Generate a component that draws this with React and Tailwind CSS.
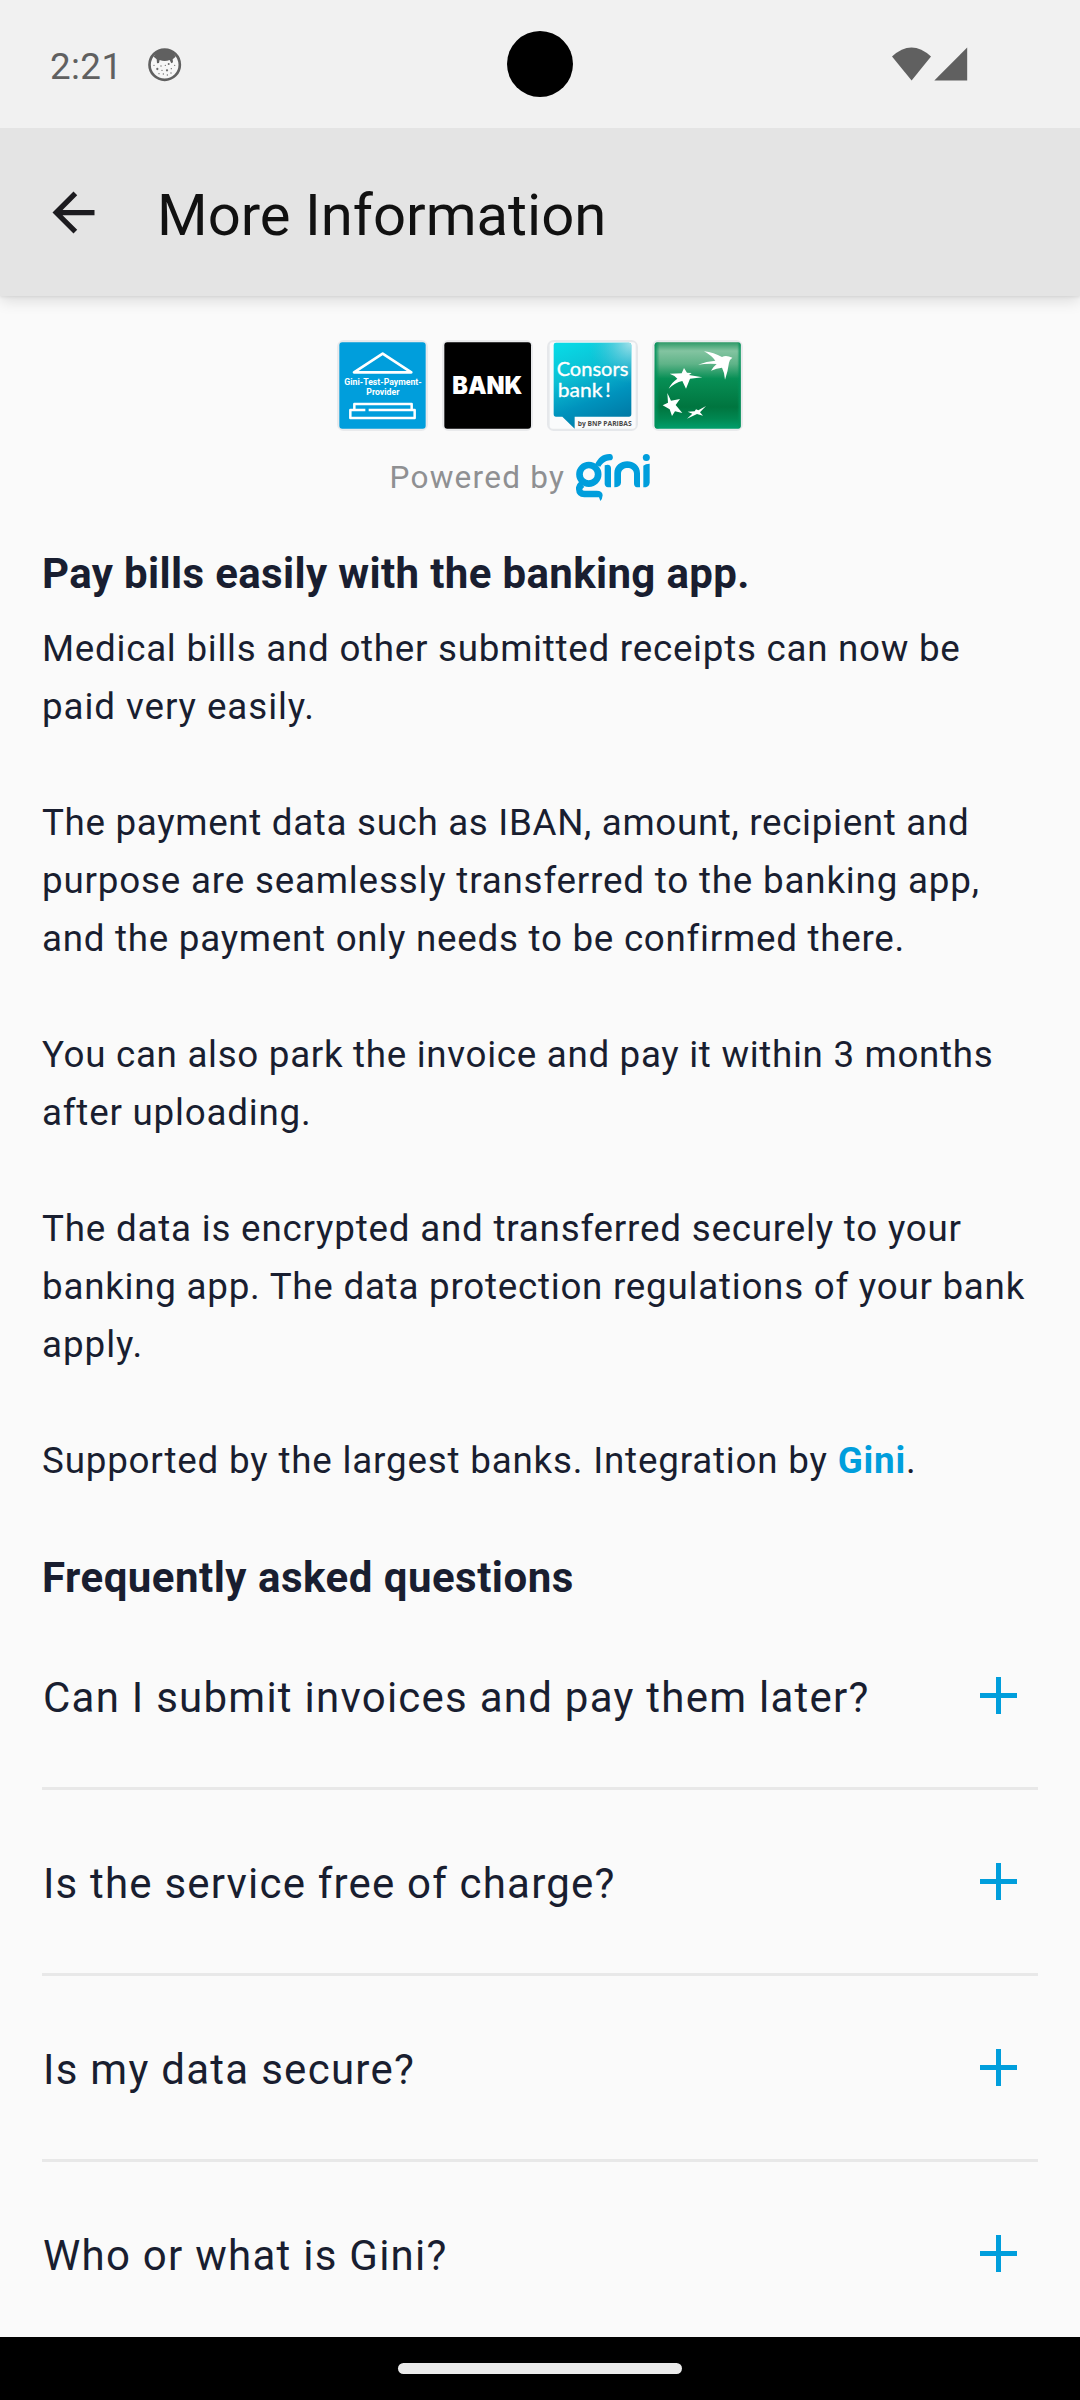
const paragraphs = [
  [
    ["Medical bills and other submitted receipts can now be", "tracking-[0.735px]"],
    ["paid very easily.", "tracking-[0.92px]"],
  ],
  [
    ["The payment data such as IBAN, amount, recipient and", "tracking-[0.675px]"],
    ["purpose are seamlessly transferred to the banking app,", "tracking-[0.81px]"],
    ["and the payment only needs to be confirmed there.", "tracking-[0.735px]"],
  ],
  [
    ["You can also park the invoice and pay it within 3 months", "tracking-[0.69px]"],
    ["after uploading.", "tracking-[0.78px]"],
  ],
  [
    ["The data is encrypted and transferred securely to your", "tracking-[0.79px]"],
    ["banking app. The data protection regulations of your bank", "tracking-[0.75px]"],
    ["apply.", "tracking-[0.98px]"],
  ],
];

const questions = [
  ["Can I submit invoices and pay them later?", "tracking-[1.25px]"],
  ["Is the service free of charge?", "tracking-[1.19px]"],
  ["Is my data secure?", "tracking-[1.27px]"],
  ["Who or what is Gini?", "tracking-[1.26px]"],
];

const freckles = [
  [497, 196, 2], [507, 192, 3], [525, 196, 2], [463, 196, 2], [473, 207, 3.4],
  [487, 211, 2], [502, 211, 3.4], [515, 206, 2], [478, 221, 2], [491, 222, 2], [503, 225, 2], [514, 219, 2], [484, 198, 2],
];

function StatusBar() {
  return (
    <header className="relative z-20 flex h-32 shrink-0 items-center bg-[#f1f1f1] text-[#606060]">
      <span className="ml-[50px] mt-[5px] w-[97px] text-[36.75px] leading-[44px] tracking-[0.4px]">2:21</span>
      <svg className="mt-px h-[35px] w-[35px]" viewBox="442 141 105 105">
        <circle cx="495" cy="194" r="45.5" fill="#f6f6f6" stroke="#606060" strokeWidth="8" />
        <path d="M462 170 Q470 149 495 148 Q520 149 528 170 L519 178 L520 187 L515 190 L510 180 Q495 186 480 180 L478 189 L472 190 L471 178 Z" fill="#606060" />
        {freckles.map(([x, y, r]) => (
          <circle key={`${x}-${y}`} cx={x} cy={y} r={r} fill="#6b6b6b" />
        ))}
      </svg>
      <div className="absolute left-[507px] top-[31px] h-[66px] w-[66px] rounded-full bg-black" />
      <svg className="ml-auto mr-[112px] h-[34px] w-[76px]" viewBox="892 46.5 76 34" fill="#606060">
        <path d="M892 56 Q911.5 38 931 56 L911.6 80 Z" />
        <path d="M934.3 80 L967.2 47 V80 Z" />
      </svg>
    </header>
  );
}

function TestProviderLogo() {
  return (
    <svg className="h-[91px] w-[91px]" viewBox="21 30 273 273">
      <rect x="21" y="30" width="273" height="273" rx="20" fill="#e9eaec" />
      <rect x="28" y="37" width="259" height="259" rx="9" fill="#009edc" />
      <g fill="none" stroke="#fff" strokeLinejoin="round">
        <path d="M158 71 L72 127 H244 Z" strokeWidth="8" />
        <path d="M116 240 H254 V264 H61 V240 H106 M73 240 V222 H245 V240" strokeWidth="7.5" />
      </g>
      <g fill="#fff" fontFamily="Roboto, sans-serif" fontWeight="700" fontSize="25">
        <text x="43" y="165" textLength="232" lengthAdjust="spacingAndGlyphs">Gini-Test-Payment-</text>
        <text x="109" y="196" textLength="99" lengthAdjust="spacingAndGlyphs">Provider</text>
      </g>
    </svg>
  );
}

function BankLogo() {
  return (
    <svg className="h-[91px] w-[91px]" viewBox="336 30 273 273">
      <rect x="336" y="30" width="273" height="273" rx="20" fill="#e9eaec" />
      <rect x="343" y="37" width="260" height="259" rx="9" fill="#000" />
      <text x="367" y="192" fill="#fff" fontFamily="Inter, sans-serif" fontWeight="900" fontSize="71" textLength="210" lengthAdjust="spacingAndGlyphs">BANK</text>
    </svg>
  );
}

function ConsorsLogo() {
  return (
    <svg className="h-[91px] w-[91px]" viewBox="21 30 273 273">
      <defs>
        <linearGradient id="consors-base" x1="0.2" y1="0" x2="0.55" y2="1">
          <stop offset="0" stopColor="#08d9e5" />
          <stop offset="0.35" stopColor="#0cc0d4" />
          <stop offset="0.7" stopColor="#0093bd" />
          <stop offset="1" stopColor="#007aa6" />
        </linearGradient>
        <radialGradient id="consors-glow" cx="1" cy="0" r="0.55">
          <stop offset="0" stopColor="#b5e4ec" stopOpacity="0.9" />
          <stop offset="1" stopColor="#4fb8d0" stopOpacity="0" />
        </radialGradient>
      </defs>
      <rect x="21" y="30" width="273" height="273" rx="20" fill="#e6e8eb" />
      <rect x="29" y="37" width="258" height="259" rx="9" fill="#fafbfc" />
      <path d="M48 38 H267 Q274 38 274 45 V252 Q274 260 267 260 H104 V296 L67 260 H48 Q41 260 41 252 V45 Q41 38 48 38 Z" fill="url(#consors-base)" />
      <rect x="41" y="38" width="233" height="222" rx="7" fill="url(#consors-glow)" />
      <g fill="#fff" stroke="#fff" strokeWidth="1" fontFamily="Lato, sans-serif" fontSize="60">
        <text x="50" y="137" textLength="215" lengthAdjust="spacingAndGlyphs">Consors</text>
        <text x="53" y="200" textLength="134" lengthAdjust="spacingAndGlyphs">bank</text>
        <text x="196" y="200">!</text>
      </g>
      <text x="113" y="287" fill="#4a4a4a" fontFamily="'Open Sans', sans-serif" fontWeight="700" fontSize="19" textLength="162" lengthAdjust="spacingAndGlyphs">by BNP PARIBAS</text>
    </svg>
  );
}

function ParibasLogo() {
  return (
    <svg className="h-[91px] w-[91px]" viewBox="336 30 273 273">
      <defs>
        <linearGradient id="paribas" x1="0" y1="0" x2="0" y2="1">
          <stop offset="0" stopColor="#2f9a68" />
          <stop offset="0.1" stopColor="#83c4a1" />
          <stop offset="0.25" stopColor="#5fb388" />
          <stop offset="0.42" stopColor="#078f55" />
          <stop offset="0.75" stopColor="#00753f" />
          <stop offset="0.88" stopColor="#008650" />
          <stop offset="1" stopColor="#009f6b" />
        </linearGradient>
        <linearGradient id="paribas-edge" x1="0" y1="0" x2="1" y2="0">
          <stop offset="0" stopColor="#00915a" />
          <stop offset="0.06" stopColor="#00915a" stopOpacity="0" />
          <stop offset="0.96" stopColor="#00915a" stopOpacity="0" />
          <stop offset="1" stopColor="#00915a" />
        </linearGradient>
      </defs>
      <rect x="336" y="30" width="273" height="273" rx="20" fill="#e9eaec" />
      <rect x="344" y="37" width="258" height="259" rx="9" fill="url(#paribas)" />
      <rect x="344" y="37" width="258" height="259" rx="9" fill="url(#paribas-edge)" />
      <g fill="#fff">
        <path d="M492 64 Q522 68 546 81 Q558 74 577 83 Q568 89 567 98 Q564 122 555 149 Q554 128 546 113 Q530 114 513 122 Q521 109 530 102 Q502 100 474 104 Q500 94 526 92 Q514 76 492 64 Z" />
        <path d="M432 114 L441 128 L455 129 L447 135 L487 142 L450 146 L438 176 L427 153 Q405 158 386 176 Q396 156 412 146 Q404 136 389 131 L425 130 Z" />
        <path d="M382 189 L393 212 L420 207 L407 225 L427 249 L405 244 L396 258 L389 238 L368 226 L384 218 Z" />
        <path d="M498 228 L480 247 L489 257 L471 252 L441 266 L457 251 L443 245 L464 244 L468 238 L475 241 Z" />
      </g>
    </svg>
  );
}

function GiniLogo() {
  return (
    <svg className="ml-[11px] h-[47px] w-[74px]" viewBox="588 42 222 141" fill="#009edc">
      <circle cx="626.5" cy="103" r="28" fill="none" stroke="#009edc" strokeWidth="20" />
      <path d="M645 74 C654 54 668 42 688 42 A9.5 9.5 0 0 1 690 61 C678 63 670 66 661 80 Z" />
      <path d="M588 142 Q591 131 599 124 L613 141 Q607 145 607 149 Q608 152 614 152 H650 Q668 152 668 166 Q667 178 661 183 L657 172 H613 Q589 171 588 148 Z" />
      <path d="M674 76 Q691 70 693 84 V142 H684 Q674 141 674 130 Z" />
      <path d="M703 142 V100 C703 52 780 52 780 100 V142 H771 Q762 141 762 130 V101 C762 78 723 78 723 101 V128 Q722 141 703 142 Z" />
      <path d="M790 77 Q796 71 809 71 V128 Q808 142 790 142 Z" />
      <circle cx="799" cy="52.5" r="10.5" />
    </svg>
  );
}

function FaqItem({ text, tracking }) {
  return (
    <li className="flex h-[186px] items-center justify-between border-b-[3px] border-[#e8e8e8]">
      <span className={`ml-px mt-1 text-[42px] leading-[58px] ${tracking}`}>{text}</span>
      <svg className="mr-[21px] h-[37px] w-[37px]" viewBox="0 0 37 37" fill="#009edc">
        <path d="M16 0 H21 V16 H37 V21 H21 V37 H16 V21 H0 V16 H16 Z" />
      </svg>
    </li>
  );
}

export default function App() {
  return (
    <div className="flex h-[2400px] w-[1080px] flex-col overflow-hidden bg-[#fafafa] font-[Roboto,sans-serif] text-[#191e30]">
      <StatusBar />
      <div className="z-10 flex h-[168px] shrink-0 items-center bg-[#e4e4e4] pl-[42px] shadow-[0_5px_14px_rgba(0,0,0,0.12),0_1px_3px_rgba(0,0,0,0.08)]">
        <svg className="h-[63px] w-[63px]" viewBox="0 0 24 24" fill="#1c1b1f">
          <path d="M20 11H7.83l5.59-5.59L12 4l-8 8 8 8 1.41-1.41L7.83 13H20v-2z" />
        </svg>
        <h1 className="ml-[52px] mt-[6px] text-[58px] leading-[70px] text-[#111111]">More Information</h1>
      </div>
      <main className="h-[2041px] shrink-0 overflow-hidden px-[42px] pt-11">
        <div className="flex justify-center gap-[14px]">
          <TestProviderLogo />
          <BankLogo />
          <ConsorsLogo />
          <ParibasLogo />
        </div>
        <div className="ml-[347.5px] mt-[23px] flex h-[47px]">
          <span className="w-[175.5px] whitespace-nowrap text-[31.5px] leading-[47px] tracking-[1.26px] text-[#8f9092]">Powered by</span>
          <GiniLogo />
        </div>
        <h2 className="mt-[44px] h-[58px] text-[42px] font-bold leading-[58px] tracking-[0.36px]">
          Pay bills easily with the banking app.
        </h2>
        <div className="mt-[17px] space-y-[58px] whitespace-nowrap text-[36.75px] leading-[58px]">
          {paragraphs.map((lines) => (
            <p key={lines[0][0]}>
              {lines.map(([line, tracking]) => (
                <span key={line} className={`block ${tracking}`}>{line}</span>
              ))}
            </p>
          ))}
          <p className="tracking-[0.805px]">
            Supported by the largest banks. Integration by <a className="font-bold text-[#009edc]">Gini</a>.
          </p>
        </div>
        <h2 className="mt-[59px] h-[55px] text-[42px] font-bold leading-[58px] tracking-[0.49px]">
          Frequently asked questions
        </h2>
        <ul>
          {questions.map(([text, tracking]) => (
            <FaqItem key={text} text={text} tracking={tracking} />
          ))}
        </ul>
      </main>
      <nav className="flex h-[63px] shrink-0 justify-center bg-black pt-[26px]">
        <div className="h-[11px] w-[284px] rounded-full bg-[#ebebeb]" />
      </nav>
    </div>
  );
}
